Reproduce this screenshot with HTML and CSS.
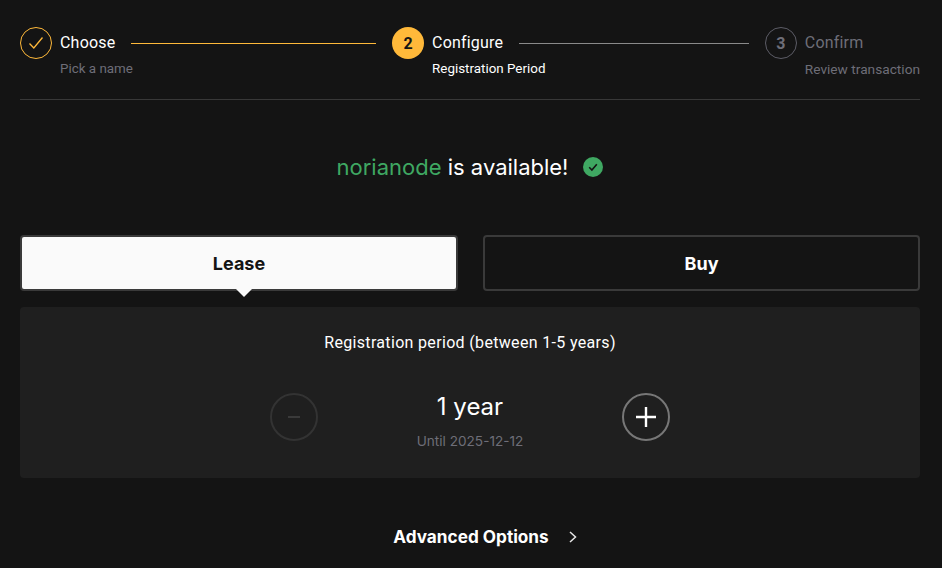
FILE: index.html

```html
<!DOCTYPE html>
<html lang="en">
<head>
    <meta charset="UTF-8">
    <meta name="viewport" content="width=device-width, initial-scale=1.0">
    <title>Register name</title>
    <link rel="stylesheet" href="styles.css">
</head>
<body>
    <div class="container">
        <div class="stepper">
            <div class="step step-done">
                <div class="step-circle">
                    <svg width="16" height="14" viewBox="0 0 16 14" fill="none" stroke="#ffb93a" stroke-width="1.3"><path d="M1.5 7.5 L5.8 12 L14.5 1.5"/></svg>
                </div>
                <div class="step-text">
                    <div class="step-title">Choose</div>
                    <div class="step-sub">Pick a name</div>
                </div>
            </div>
            <div class="step-line line-first"></div>
            <div class="step step-active">
                <div class="step-circle">2</div>
                <div class="step-text">
                    <div class="step-title">Configure</div>
                    <div class="step-sub">Registration Period</div>
                </div>
            </div>
            <div class="step-line line-second"></div>
            <div class="step step-todo">
                <div class="step-circle">3</div>
                <div class="step-text">
                    <div class="step-title">Confirm</div>
                    <div class="step-sub">Review transaction</div>
                </div>
            </div>
        </div>

        <div class="status">
            <h2 class="status-text"><span class="status-name">norianode</span> is available!</h2>
            <svg width="20" height="20" viewBox="0 0 20 20"><circle cx="10" cy="10" r="10" fill="#3fa862"/><path d="M6.2 10.2 L8.9 13 L13.8 7.2" fill="none" stroke="#141414" stroke-width="1.6"/></svg>
        </div>

        <div class="tabs">
            <button class="tab tab-selected">Lease</button>
            <button class="tab">Buy</button>
        </div>

        <div class="panel">
            <div class="panel-title">Registration period (between 1-5 years)</div>
            <div class="period">
                <button class="round-btn round-btn-off">
                    <svg width="14" height="14" viewBox="0 0 14 14" stroke="#3a3a3a" stroke-width="2"><path d="M1 7 H13"/></svg>
                </button>
                <div class="period-value">
                    <div class="period-years">1 year</div>
                    <div class="period-until">Until 2025-12-12</div>
                </div>
                <button class="round-btn">
                    <svg width="20" height="20" viewBox="0 0 20 20" stroke="#ffffff" stroke-width="2.4"><path d="M0 10 H20 M10 0 V20"/></svg>
                </button>
            </div>
        </div>

        <div class="advanced">
            <span>Advanced Options</span>
            <svg width="8" height="12" viewBox="0 0 8 12" fill="none" stroke="#e6e6e6" stroke-width="1.5"><path d="M1 1 L6.5 6 L1 11"/></svg>
        </div>
    </div>
</body>
</html>
```

FILE: styles.css

```css
* {
    box-sizing: border-box;
}

body {
    margin: 0;
    padding: 0;
    background: #141414;
    color: #fff;
    font-family: Inter, 'Noto Sans', sans-serif;
    height: 568px;
    overflow: hidden;
}

.container {
    padding: 27px 22px 0 20px;
}

/* stepper */
.stepper {
    display: flex;
    align-items: flex-start;
    height: 73px;
    border-bottom: 1px solid #383838;
    font-family: Roboto, sans-serif;
}

.step {
    display: flex;
    gap: 8px;
}

.step-circle {
    width: 32px;
    height: 32px;
    border-radius: 50%;
    display: flex;
    align-items: center;
    justify-content: center;
    font-weight: 700;
    font-size: 16px;
    flex-shrink: 0;
}

.step-done .step-circle {
    border: 1px solid #ffb93a;
}

.step-active .step-circle {
    background: #ffb93a;
    color: #141414;
}

.step-todo .step-circle {
    border: 1px solid #5c5c66;
    color: #6e6e78;
}

.step-title {
    font-size: 16px;
    line-height: 32px;
    letter-spacing: 0.2px;
}

/* the line runs from the title, the sub text sits under it */
.step-sub {
    font-size: 13.4px;
    line-height: 16px;
    margin-top: 2px;
    color: #6e6e78;
    white-space: nowrap;
    width: 0;
}

.step-active .step-sub {
    color: #fff;
}

.step-todo .step-title {
    color: #6e6e78;
}

.step-todo .step-sub {
    width: auto;
    font-size: 13.7px;
}

.step-line {
    height: 1px;
    background: #8a8a8a;
    margin: 16px 16px 0;
}

.line-first {
    flex: 244;
    background: #ffb93a;
}

.line-second {
    flex: 229;
}

/* heading */
.status {
    margin-top: 52px;
    height: 30px;
    display: flex;
    justify-content: center;
    align-items: center;
    gap: 15px;
}

.status-text {
    margin: 0;
    font-size: 22px;
    line-height: 30px;
    font-weight: 400;
}

.status-name {
    color: #3fa862;
}

/* lease / buy */
.tabs {
    display: grid;
    grid-template-columns: 438px 437px;
    gap: 25px;
    margin-top: 53px;
}

.tab {
    height: 56px;
    border: 2px solid #3a3a3a;
    border-radius: 4px;
    background: #141414;
    color: #fff;
    font-family: Inter, sans-serif;
    font-size: 18px;
    font-weight: 700;
    position: relative;
}

.tab-selected {
    background: #fafafa;
    color: #141414;
}

.tab-selected::after {
    content: '';
    position: absolute;
    left: 214px;
    bottom: -8px;
    border-left: 8px solid transparent;
    border-right: 8px solid transparent;
    border-top: 8px solid #fafafa;
}

/* period */
.panel {
    margin-top: 16px;
    height: 171px;
    background: #1f1f1f;
    border-radius: 4px;
    padding-top: 26px;
    text-align: center;
}

.panel-title {
    font-size: 16px;
    line-height: 20px;
    letter-spacing: 0.33px;
    font-family: Roboto, sans-serif;
}

.period {
    display: flex;
    justify-content: center;
    align-items: flex-start;
    margin-top: 40px;
}

.round-btn {
    width: 48px;
    height: 48px;
    border-radius: 50%;
    border: 2px solid #777;
    background: transparent;
    display: flex;
    align-items: center;
    justify-content: center;
    padding: 0;
}

.round-btn-off {
    border-color: #333;
}

.period-value {
    width: 304px;
}

.period-years {
    font-size: 24px;
    line-height: 28px;
}

.period-until {
    margin-top: 10px;
    font-size: 13.6px;
    line-height: 20px;
    color: #6e6e78;
}

/* advanced */
.advanced {
    margin-top: 47px;
    padding-left: 30px;
    display: flex;
    justify-content: center;
    align-items: center;
    gap: 20px;
    font-size: 17.2px;
    font-weight: 700;
    line-height: 24px;
}
```
